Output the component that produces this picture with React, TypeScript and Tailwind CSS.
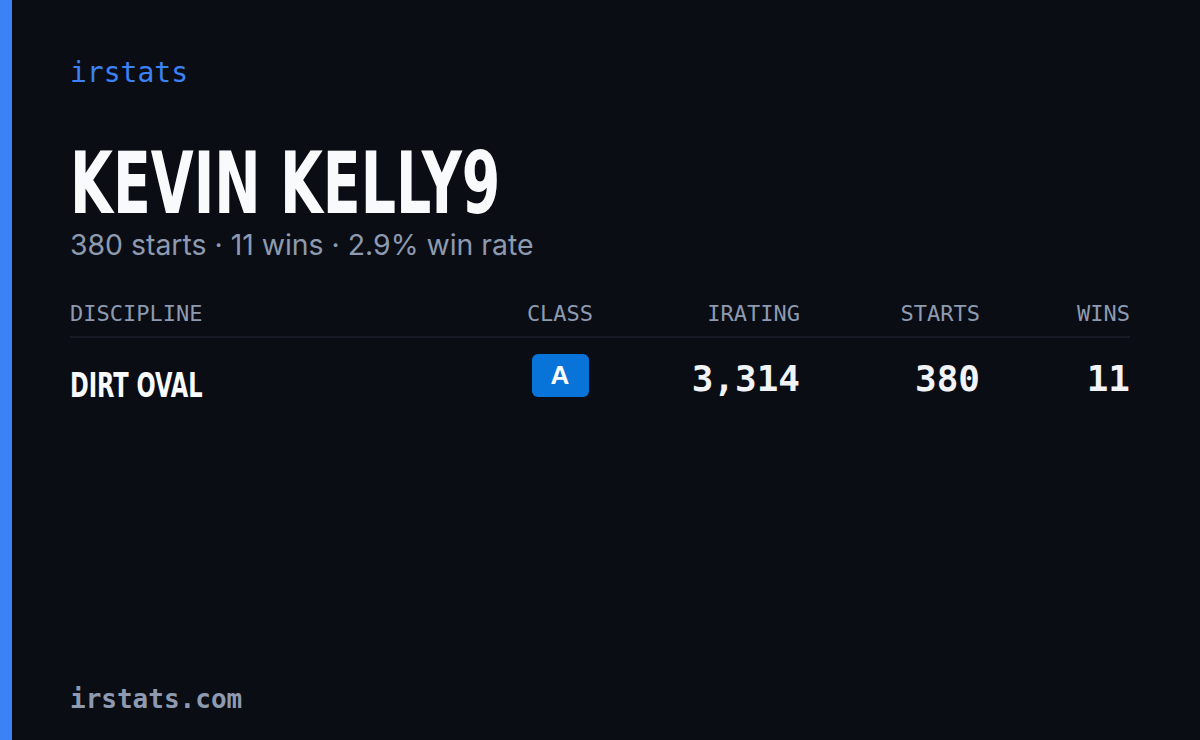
const rows = [
  { discipline: "DIRT OVAL", cls: "A", irating: "3,314", starts: "380", wins: "11" },
];

const mono = "font-['DejaVu_Sans_Mono','Liberation_Mono',monospace]";
const cond = "font-['Liberation_Sans_Narrow','DejaVu_Sans_Condensed','DejaVu_Sans',sans-serif] [font-stretch:condensed]";
const cols = "grid grid-cols-[1fr_120px_180px_180px_150px]";

export default function App() {
  return (
    <div className="flex h-[740px] w-[1200px] bg-[#0a0d14]">
      {/* accent bar */}
      <div className="w-[12px] shrink-0 bg-[#3b82f6]" />

      <div className="flex flex-1 flex-col pl-[58px] pr-[70px]">
        <div className={`${mono} mt-[56px] text-[28px] leading-[34px] font-medium text-[#3b82f6]`}>irstats</div>

        <h1 className={`${cond} mt-[53px] origin-left scale-x-[0.716] whitespace-nowrap text-[86px] leading-[80px] font-bold text-[#f8fafc]`}>
          KEVIN KELLY9
        </h1>
        <p className="mt-[4px] font-['Inter','Noto_Sans',sans-serif] text-[28.4px] leading-[36px] text-[#8d9ab0]">
          380 starts · 11 wins · 2.9% win rate
        </p>

        {/* table */}
        <div className="mt-[39px]">
          <div className={`${mono} ${cols} border-b-2 border-[#161a24] pb-[10px] text-[22px] leading-[24px] font-medium text-[#8d9ab0]`}>
            <div>DISCIPLINE</div>
            <div className="text-center">CLASS</div>
            <div className="text-right">IRATING</div>
            <div className="text-right">STARTS</div>
            <div className="text-right">WINS</div>
          </div>
          {rows.map((r) => (
            <div key={r.discipline} className={`${cols} items-start pt-[16px]`}>
              <div className={`${cond} origin-left scale-x-[0.737] whitespace-nowrap pt-[10px] text-[34px] leading-[43px] font-bold text-[#f8fafc]`}>
                {r.discipline}
              </div>
              <div className="flex justify-center">
                <span className="flex h-[43px] w-[57px] items-center justify-center rounded-[6px] bg-[#0873d9] font-['Liberation_Sans',sans-serif] text-[26px] font-bold text-white">
                  {r.cls}
                </span>
              </div>
              <div className={`${mono} pt-[3px] text-right text-[36px] leading-[43px] font-semibold text-[#f1f3f7]`}>{r.irating}</div>
              <div className={`${mono} pt-[3px] text-right text-[36px] leading-[43px] font-semibold text-[#f1f3f7]`}>{r.starts}</div>
              <div className={`${mono} pt-[3px] text-right text-[36px] leading-[43px] font-semibold text-[#f1f3f7]`}>{r.wins}</div>
            </div>
          ))}
        </div>

        <div className={`${mono} mt-auto mb-[25px] text-[26px] leading-[32px] font-semibold text-[#8d9ab0]`}>irstats.com</div>
      </div>
    </div>
  );
}
